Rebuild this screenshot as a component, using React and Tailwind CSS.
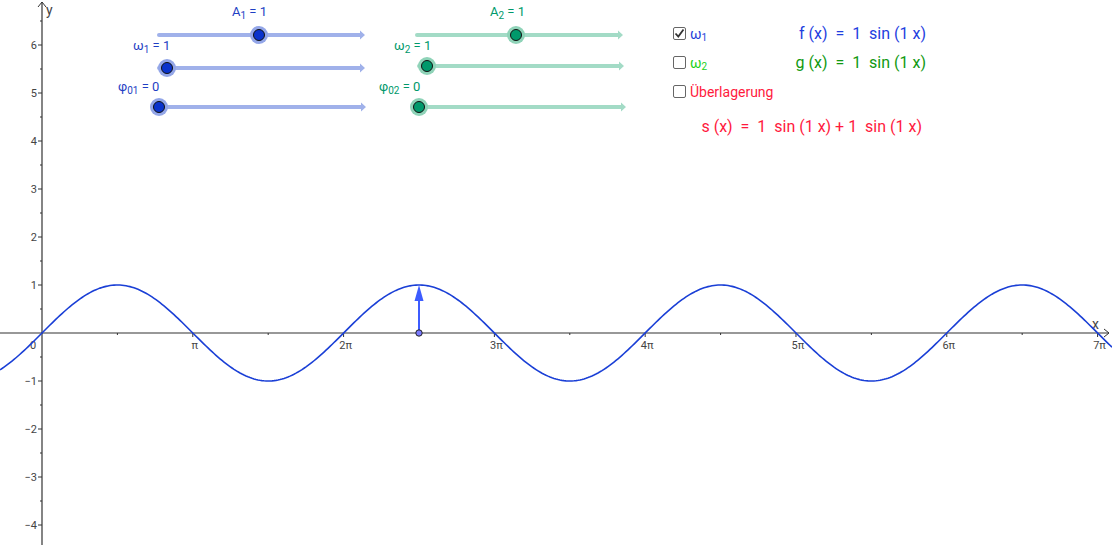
import React from 'react'

const OX = 42
const OY = 333
const U = 48

function curvePath() {
  const pts = []
  for (let px = 0; px <= 1112; px += 2) {
    const y = OY - U * Math.sin((px - OX) / U)
    pts.push(`${px === 0 ? 'M' : 'L'}${px},${y.toFixed(2)}`)
  }
  return pts.join(' ')
}

const xLabels = ['π', '2π', '3π', '4π', '5π', '6π', '7π']
const yVals = [6, 5, 4, 3, 2, 1, -1, -2, -3, -4]

function Graph() {
  const xTicks = []
  for (let k = 1; k <= 15; k++) xTicks.push(OX + (k * Math.PI * U) / 2)
  const yTicks = []
  for (let k = -9; k <= 13; k++) if (k !== 0) yTicks.push(k)

  return (
    <svg width="1112" height="545" className="absolute inset-0">
      {/* axes */}
      <line x1="0" y1={OY} x2="1109" y2={OY} stroke="#333" strokeWidth="1.2" />
      <path d="M1104,329 L1109,333 L1104,337" fill="none" stroke="#333" strokeWidth="1" />
      <line x1={OX} y1="2" x2={OX} y2="545" stroke="#333" strokeWidth="1.2" />
      <path d="M38,7 L42,2 L46,7" fill="none" stroke="#333" strokeWidth="1" />

      {xTicks.map((x, i) => (
        <line key={i} x1={x} y1={OY} x2={x} y2={i % 2 === 1 ? OY + 4 : OY + 2} stroke="#333" strokeWidth="1" />
      ))}
      {yTicks.map(k => (
        <line key={k} x1={k % 2 === 0 ? OX - 4 : OX - 2} y1={OY - (k * U) / 2} x2={OX} y2={OY - (k * U) / 2} stroke="#333" strokeWidth="1" />
      ))}

      <g fill="#444" fontSize="11">
        <text x="30" y="349">0</text>
        {xLabels.map((t, i) => (
          <text key={t} x={OX + (i + 1) * Math.PI * U + 2} y="349" textAnchor="middle">{t}</text>
        ))}
        {yVals.map(v => (
          <text key={v} x="37" y={OY - v * U + 4} textAnchor="end">{v < 0 ? `−${-v}` : v}</text>
        ))}
        <text x="46" y="15" fontSize="14">y</text>
        <text x="1092" y="329" fontSize="14">x</text>
      </g>

      <path d={curvePath()} fill="none" stroke="#1a3fd6" strokeWidth="1.6" />

      {/* vector at 5π/2 */}
      <line x1="419" y1={OY} x2="419" y2="298" stroke="#3d5cff" strokeWidth="2" />
      <path d="M414.5,301 L419,285 L423.5,301 Z" fill="#3d5cff" />
      <circle cx="419" cy={OY} r="3.2" fill="#7a7aff" stroke="#222" strokeWidth="1" />
    </svg>
  )
}

const tones = {
  blue: { track: 'bg-[#a0b1ea]', arrow: '#a0b1ea', halo: 'bg-[#93a6e8]', fill: 'bg-[#0a33cc]', text: 'text-[#1f3fc4]' },
  green: { track: 'bg-[#a3dbc6]', arrow: '#a3dbc6', halo: 'bg-[#8fd3b8]', fill: 'bg-[#00996b]', text: 'text-[#00996b]' },
}

function Track({ tone, className, knob }) {
  const t = tones[tone]
  return (
    <div className={`relative flex items-center h-[4px] ${className}`}>
      <div className={`h-[4px] flex-1 rounded-l-full ${t.track}`} />
      <svg width="7" height="10" className="shrink-0 -ml-px">
        <path d="M0,3 L2,3 L2,0.5 L7,5 L2,9.5 L2,7 L0,7 Z" fill={t.arrow} />
      </svg>
      <div className={`absolute top-1/2 -translate-y-1/2 w-[18px] h-[18px] rounded-full flex items-center justify-center ${t.halo} ${knob}`}>
        <div className={`w-[12px] h-[12px] rounded-full border border-[#111] ${t.fill}`} />
      </div>
    </div>
  )
}

function Label({ tone, className, base, sub, value }) {
  return (
    <div className={`h-[14px] text-[13px] leading-[14px] whitespace-nowrap ${tones[tone].text} ${className}`}>
      {base}
      <sub className="text-[10px]">{sub}</sub> = {value}
    </div>
  )
}

function Check({ checked, children }) {
  return (
    <div className="flex items-center gap-[4px]">
      <div className="w-[13px] h-[13px] border border-[#666] rounded-[2px] bg-white flex items-center justify-center">
        {checked && (
          <svg width="11" height="11" viewBox="0 0 11 11">
            <path d="M1.5,5.5 L4.3,8.5 L9.5,1.5" fill="none" stroke="#333" strokeWidth="1.8" />
          </svg>
        )}
      </div>
      {children}
    </div>
  )
}

export default function App() {
  return (
    <div className="relative w-[1112px] h-[545px] bg-white overflow-hidden font-[Roboto,'Liberation_Sans',sans-serif]">
      <Graph />

      {/* slider groups */}
      <div className="absolute top-0 left-[118px] flex gap-[13px]">
        <div className="w-[248px] flex flex-col pt-[5px]">
          <Label tone="blue" className="ml-[114px]" base="A" sub="1" value="1" />
          <Track tone="blue" className="mt-[14px] ml-[39px] w-[208px]" knob="left-[93px]" />
          <Label tone="blue" className="mt-[2px] ml-[15px]" base="ω" sub="1" value="1" />
          <Track tone="blue" className="mt-[13px] ml-[39px] w-[208px]" knob="left-[1px]" />
          <Label tone="blue" className="mt-[10px]" base="φ" sub="01" value="0" />
          <Track tone="blue" className="mt-[11px] ml-[37px] w-[211px]" knob="left-[-5px]" />
        </div>
        <div className="w-[248px] flex flex-col pt-[5px]">
          <Label tone="green" className="ml-[111px]" base="A" sub="2" value="1" />
          <Track tone="green" className="mt-[14px] ml-[36px] w-[208px]" knob="left-[92px]" />
          <Label tone="green" className="mt-[2px] ml-[15px]" base="ω" sub="2" value="1" />
          <Track tone="green" className="mt-[11px] ml-[38px] w-[207px]" knob="left-[1px]" />
          <Label tone="green" className="mt-[12px]" base="φ" sub="02" value="0" />
          <Track tone="green" className="mt-[11px] ml-[36px] w-[211px]" knob="left-[-5px]" />
        </div>
      </div>

      {/* checkboxes and formulas */}
      <div className="absolute top-[19px] left-[673px] w-[253px] flex flex-col">
        <div className="h-[29px] flex items-center justify-between">
          <Check checked>
            <span className="text-[14px] leading-none text-[#1f3fd9]">ω<sub className="text-[10px]">1</sub></span>
          </Check>
          <span className="text-[16px] leading-none text-[#1f3fe0] whitespace-pre">f (x)  =  1  sin (1 x)</span>
        </div>
        <div className="h-[29px] flex items-center justify-between">
          <Check>
            <span className="text-[14px] leading-none text-[#1ad11a]">ω<sub className="text-[10px]">2</sub></span>
          </Check>
          <span className="text-[16px] leading-none text-[#119911] whitespace-pre">g (x)  =  1  sin (1 x)</span>
        </div>
        <div className="h-[29px] flex items-center">
          <Check>
            <span className="text-[14px] leading-none text-[#ff1a3d]">Überlagerung</span>
          </Check>
        </div>
        <div className="mt-[11px] h-[20px] flex items-center justify-end pr-[4px]">
          <span className="text-[16px] leading-none text-[#ff1a3d] whitespace-pre">s (x)  =  1  sin (1 x) + 1  sin (1 x)</span>
        </div>
      </div>
    </div>
  )
}
